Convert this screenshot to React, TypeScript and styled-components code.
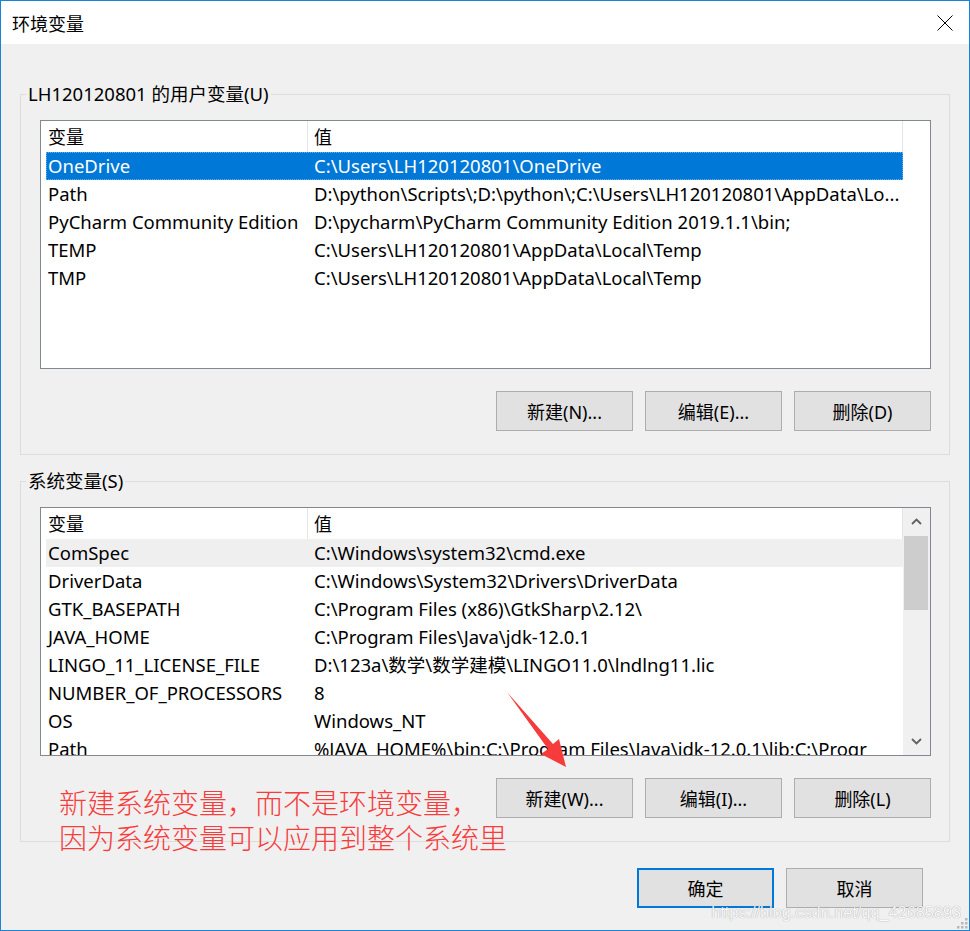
import React from "react";
import styled, { createGlobalStyle } from "styled-components";

const Global = createGlobalStyle`
  html, body { margin: 0; padding: 0; background: #f0f0f0; }
  body { font-family: "Noto Sans", "Noto Sans CJK SC", sans-serif; }
  * { box-sizing: border-box; }
`;

const Window = styled.div`
  position: relative;
  width: 970px;
  height: 931px;
  border: 1px solid #1883d7;
  background: #f0f0f0;
  overflow: hidden;
  color: #000;
  font-family: "Noto Sans", "Noto Sans CJK SC", sans-serif;
  font-size: 18px;
`;

const TitleBar = styled.div`
  height: 43px;
  background: #fff;
  display: flex;
  align-items: center;
  justify-content: space-between;
  padding-left: 11px;
`;

const Title = styled.div`
  font-family: "Noto Sans CJK SC", sans-serif;
  font-size: 18px;
  line-height: 24px;
`;

const CloseButton = styled.div`
  width: 48px;
  height: 43px;
  display: flex;
  align-items: center;
  justify-content: center;
`;

const Body = styled.div`
  padding: 0 19px;
`;

const Group = styled.fieldset<{ $top: number }>`
  margin: ${(p) => p.$top}px 0 0 0;
  min-width: 0;
  border: 1px solid #dcdcdc;
  padding: 14px 18px 23px 5px;
`;

const Legend = styled.legend`
  padding: 0 2px;
  font-size: 18.5px;
  line-height: 24px;
  white-space: nowrap;
`;

const List = styled.div`
  margin-left: 14px;
  width: 891px;
  height: 249px;
  border: 1px solid #828790;
  background: #fff;
  display: flex;
  overflow: hidden;
  font-size: 18.5px;
`;

const ListContent = styled.div`
  width: 862px;
  flex: none;
  overflow: hidden;
`;

const Header = styled.div`
  height: 31px;
  display: grid;
  grid-template-columns: 266px 596px;
  line-height: 31px;
`;

const HeaderCell = styled.div<{ $divider?: boolean }>`
  padding-left: ${(p) => (p.$divider ? 6 : 7)}px;
  border-left: ${(p) => (p.$divider ? "1px solid #e5e5e5" : "none")};
  border-right: ${(p) => (p.$divider ? "1px solid #e5e5e5" : "none")};
  font-family: "Noto Sans CJK SC", sans-serif;
  font-size: 18px;
`;

const Row = styled.div<{ $state?: "selected" | "hover" }>`
  margin-left: 5px;
  height: 28px;
  display: grid;
  grid-template-columns: 261px 596px;
  line-height: 28px;
  white-space: nowrap;
  background: ${(p) =>
    p.$state === "selected" ? "#0078d7" : p.$state === "hover" ? "#efefef" : "transparent"};
  color: ${(p) => (p.$state === "selected" ? "#fff" : "#000")};
  outline: ${(p) => (p.$state === "selected" ? "1px dotted #6fb2ea" : "none")};
  outline-offset: -1px;
`;

const Cell = styled.div<{ $second?: boolean }>`
  padding-left: ${(p) => (p.$second ? 7 : 2)}px;
  overflow: hidden;
  white-space: nowrap;
`;

const ScrollBar = styled.div`
  width: 27px;
  flex: none;
  background: #f0f0f0;
  display: flex;
  flex-direction: column;
`;

const ScrollArrow = styled.div`
  height: 27px;
  display: flex;
  align-items: center;
  justify-content: center;
`;

const ScrollTrack = styled.div`
  flex: 1;
  padding: 1px 2px 0 1px;
`;

const ScrollThumb = styled.div`
  height: 74px;
  background: #cdcdcd;
`;

const ButtonRow = styled.div`
  margin: 22px 0 0 14px;
  width: 891px;
  display: flex;
  justify-content: flex-end;
  gap: 12px;
`;

const Button = styled.button<{ $default?: boolean }>`
  width: 137px;
  height: 40px;
  margin: 0;
  padding: 0;
  background: #e1e1e1;
  border: ${(p) => (p.$default ? "2px solid #0078d7" : "1px solid #adadad")};
  font-family: "Noto Sans", "Noto Sans CJK SC", sans-serif;
  font-size: 18px;
  color: #000;
  display: flex;
  align-items: center;
  justify-content: center;
`;

const DialogButtons = styled.div`
  margin-top: 26px;
  padding-right: 27px;
  display: flex;
  justify-content: flex-end;
  gap: 12px;
`;

const Annotation = styled.div`
  position: absolute;
  left: 58px;
  top: 784px;
  font-family: "Noto Sans CJK SC", sans-serif;
  font-weight: 300;
  font-size: 28px;
  line-height: 35px;
  color: #f73c3c;
  white-space: nowrap;
`;

const ArrowSvg = styled.svg`
  position: absolute;
  left: 0;
  top: 0;
  pointer-events: none;
`;

const Watermark = styled.div`
  position: absolute;
  right: 8px;
  bottom: 8px;
  font-family: "Liberation Sans", Arial, sans-serif;
  font-size: 16.3px;
  line-height: 20px;
  color: rgba(255, 255, 255, 0.95);
  text-shadow: 0 0 1px rgba(0, 0, 0, 0.32), 0 0 1px rgba(0, 0, 0, 0.12);
`;

const Grip = styled.svg`
  position: absolute;
  right: 1px;
  bottom: 1px;
`;

type Item = { name: string; value: string; state?: "selected" | "hover" };

const userVars: Item[] = [
  { name: "OneDrive", value: "C:\\Users\\LH120120801\\OneDrive", state: "selected" },
  { name: "Path", value: "D:\\python\\Scripts\\;D:\\python\\;C:\\Users\\LH120120801\\AppData\\Lo..." },
  { name: "PyCharm Community Edition", value: "D:\\pycharm\\PyCharm Community Edition 2019.1.1\\bin;" },
  { name: "TEMP", value: "C:\\Users\\LH120120801\\AppData\\Local\\Temp" },
  { name: "TMP", value: "C:\\Users\\LH120120801\\AppData\\Local\\Temp" },
];

const sysVars: Item[] = [
  { name: "ComSpec", value: "C:\\Windows\\system32\\cmd.exe", state: "hover" },
  { name: "DriverData", value: "C:\\Windows\\System32\\Drivers\\DriverData" },
  { name: "GTK_BASEPATH", value: "C:\\Program Files (x86)\\GtkSharp\\2.12\\" },
  { name: "JAVA_HOME", value: "C:\\Program Files\\Java\\jdk-12.0.1" },
  { name: "LINGO_11_LICENSE_FILE", value: "D:\\123a\\数学\\数学建模\\LINGO11.0\\lndlng11.lic" },
  { name: "NUMBER_OF_PROCESSORS", value: "8" },
  { name: "OS", value: "Windows_NT" },
  { name: "Path", value: "%JAVA_HOME%\\bin;C:\\Program Files\\Java\\jdk-12.0.1\\lib;C:\\Progr" },
];

const Chevron = ({ up }: { up?: boolean }) => (
  <svg width="11" height="7" viewBox="0 0 11 7">
    <path
      d={up ? "M1 6 L5.5 1.5 L10 6" : "M1 1 L5.5 5.5 L10 1"}
      fill="none"
      stroke="#606060"
      strokeWidth="1.8"
    />
  </svg>
);

const VarList = ({ items, scroll }: { items: Item[]; scroll?: boolean }) => (
  <List>
    <ListContent>
      <Header>
        <HeaderCell>变量</HeaderCell>
        <HeaderCell $divider>值</HeaderCell>
      </Header>
      {items.map((it, i) => (
        <Row key={i} $state={it.state}>
          <Cell>{it.name}</Cell>
          <Cell $second>{it.value}</Cell>
        </Row>
      ))}
    </ListContent>
    {scroll && (
      <ScrollBar>
        <ScrollArrow>
          <Chevron up />
        </ScrollArrow>
        <ScrollTrack>
          <ScrollThumb />
        </ScrollTrack>
        <ScrollArrow>
          <Chevron />
        </ScrollArrow>
      </ScrollBar>
    )}
  </List>
);

export default function App() {
  return (
    <>
      <Global />
      <Window>
        <TitleBar>
          <Title>环境变量</Title>
          <CloseButton>
            <svg width="16" height="16" viewBox="0 0 16 16">
              <path d="M0.5 0.5 L15.5 15.5 M15.5 0.5 L0.5 15.5" stroke="#000" strokeWidth="1" />
            </svg>
          </CloseButton>
        </TitleBar>
        <Body>
          <Group $top={38}>
            <Legend>LH120120801 的用户变量(U)</Legend>
            <VarList items={userVars} />
            <ButtonRow>
              <Button>新建(N)...</Button>
              <Button>编辑(E)...</Button>
              <Button>删除(D)</Button>
            </ButtonRow>
          </Group>
          <Group $top={14}>
            <Legend>系统变量(S)</Legend>
            <VarList items={sysVars} scroll />
            <ButtonRow>
              <Button>新建(W)...</Button>
              <Button>编辑(I)...</Button>
              <Button>删除(L)</Button>
            </ButtonRow>
          </Group>
          <DialogButtons>
            <Button $default>确定</Button>
            <Button>取消</Button>
          </DialogButtons>
        </Body>
        <Annotation>
          新建系统变量，而不是环境变量，
          <br />
          因为系统变量可以应用到整个系统里
        </Annotation>
        <ArrowSvg width="970" height="931" viewBox="1 1 970 931">
          <polygon
            points="507,692 553,744 559,739 566,767 541,754 548,749"
            fill="#f53b3b"
          />
        </ArrowSvg>
        <Watermark>https://blog.csdn.net/qq_42685893</Watermark>
        <Grip width="13" height="13" viewBox="0 0 13 13">
          {[
            [10, 2],
            [6, 6],
            [10, 6],
            [2, 10],
            [6, 10],
            [10, 10],
          ].map(([x, y], i) => (
            <rect key={i} x={x} y={y} width="2.5" height="2.5" fill="#b8b8b8" />
          ))}
        </Grip>
      </Window>
    </>
  );
}
